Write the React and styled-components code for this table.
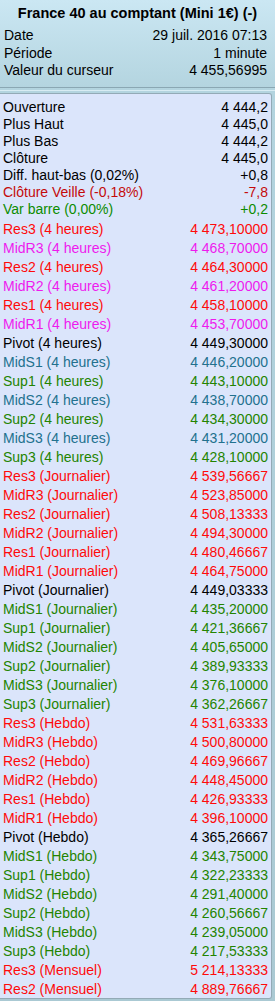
import React from 'react';
import styled, { createGlobalStyle } from 'styled-components';

const GlobalStyle = createGlobalStyle`
  html, body {
    margin: 0;
    padding: 0;
    height: 1001px;
    overflow: hidden;
  }
  body {
    font-family: "Liberation Sans", Arial, sans-serif;
    background: linear-gradient(180deg, #cbe7f3 0px, #b3d4df 90px, #aac9d3 100%);
  }
`;

const colors = {
  black: '#000000',
  darkred: '#c40a0a',
  green: '#0c8c00',
  red: '#ff0a0a',
  magenta: '#ee1aee',
  teal: '#22718e',
  olive: '#238400',
};

const Window = styled.div`
  width: 275px;
  height: 1001px;
  display: flex;
  flex-direction: column;
`;

const Header = styled.div`
  padding: 4px 8px 0 4px;
  height: 87px;
  box-sizing: border-box;
`;

const Title = styled.div`
  font-weight: bold;
  font-size: 14.5px;
  line-height: 18px;
  text-align: center;
  color: #000;
  padding-left: 4px;
  margin-bottom: 5px;
`;

const InfoRow = styled.div`
  display: flex;
  justify-content: space-between;
  font-size: 14px;
  line-height: 17.5px;
  color: #000;
`;

const Divider = styled.div`
  height: 2px;
  border-top: 1px solid #8aa7b3;
  border-bottom: 1px solid #d8ecf3;
  margin-bottom: 2px;
`;

const Panel = styled.div`
  flex: 1;
  margin: 0 3px 2px 0;
  background: #dbe5fb;
  border: 1px solid #93aab6;
  border-left: none;
  border-radius: 0 3px 3px 0;
  padding: 5px 3px 0 3px;
  overflow: hidden;
`;

const Group = styled.div`
  margin-top: ${p => (p.$gap ? '2px' : '0')};
`;

const Row = styled.div`
  display: flex;
  justify-content: space-between;
  font-size: 14px;
  height: ${p => p.$h}px;
  line-height: ${p => p.$h}px;
  color: ${p => p.$color};
  white-space: nowrap;
`;

const summary = [
  ['Ouverture', '4 444,2', 'black'],
  ['Plus Haut', '4 445,0', 'black'],
  ['Plus Bas', '4 444,2', 'black'],
  ['Clôture', '4 445,0', 'black'],
  ['Diff. haut-bas (0,02%)', '+0,8', 'black'],
  ['Clôture Veille (-0,18%)', '-7,8', 'darkred'],
  ['Var barre (0,00%)', '+0,2', 'green'],
];

const levelNames = ['Res3', 'MidR3', 'Res2', 'MidR2', 'Res1', 'MidR1', 'Pivot', 'MidS1', 'Sup1', 'MidS2', 'Sup2', 'MidS3', 'Sup3'];

const periods = [
  {
    name: '4 heures',
    mid: true,
    values: ['4 473,10000', '4 468,70000', '4 464,30000', '4 461,20000', '4 458,10000', '4 453,70000', '4 449,30000', '4 446,20000', '4 443,10000', '4 438,70000', '4 434,30000', '4 431,20000', '4 428,10000'],
  },
  {
    name: 'Journalier',
    values: ['4 539,56667', '4 523,85000', '4 508,13333', '4 494,30000', '4 480,46667', '4 464,75000', '4 449,03333', '4 435,20000', '4 421,36667', '4 405,65000', '4 389,93333', '4 376,10000', '4 362,26667'],
  },
  {
    name: 'Hebdo',
    values: ['4 531,63333', '4 500,80000', '4 469,96667', '4 448,45000', '4 426,93333', '4 396,10000', '4 365,26667', '4 343,75000', '4 322,23333', '4 291,40000', '4 260,56667', '4 239,05000', '4 217,53333'],
  },
  {
    name: 'Mensuel',
    names: ['Res3', 'Res2'],
    values: ['5 214,13333', '4 889,76667'],
  },
];

function levelColor(name, mid) {
  if (name === 'Pivot') return colors.black;
  if (name.startsWith('MidR')) return mid ? colors.magenta : colors.red;
  if (name.startsWith('MidS')) return mid ? colors.teal : colors.olive;
  if (name.startsWith('Res')) return colors.red;
  return colors.olive;
}

export default function App() {
  const levels = periods.flatMap(p =>
    p.values.map((v, i) => {
      const n = (p.names || levelNames)[i];
      return {
        label: `${n} (${p.name})`,
        value: v,
        color: levelColor(n, p.mid),
      };
    })
  );

  return (
    <>
      <GlobalStyle />
      <Window>
        <Header>
          <Title>France 40 au comptant (Mini 1€) (-)</Title>
          <InfoRow><span>Date</span><span>29 juil. 2016 07:13</span></InfoRow>
          <InfoRow><span>Période</span><span>1 minute</span></InfoRow>
          <InfoRow><span>Valeur du curseur</span><span>4 455,56995</span></InfoRow>
        </Header>
        <Divider />
        <Panel>
          <Group>
            {summary.map(([label, value, c]) => (
              <Row key={label} $h={17} $color={colors[c]}>
                <span>{label}</span>
                <span>{value}</span>
              </Row>
            ))}
          </Group>
          <Group $gap>
            {levels.map(l => (
              <Row key={l.label} $h={19} $color={l.color}>
                <span>{l.label}</span>
                <span>{l.value}</span>
              </Row>
            ))}
          </Group>
        </Panel>
      </Window>
    </>
  );
}
